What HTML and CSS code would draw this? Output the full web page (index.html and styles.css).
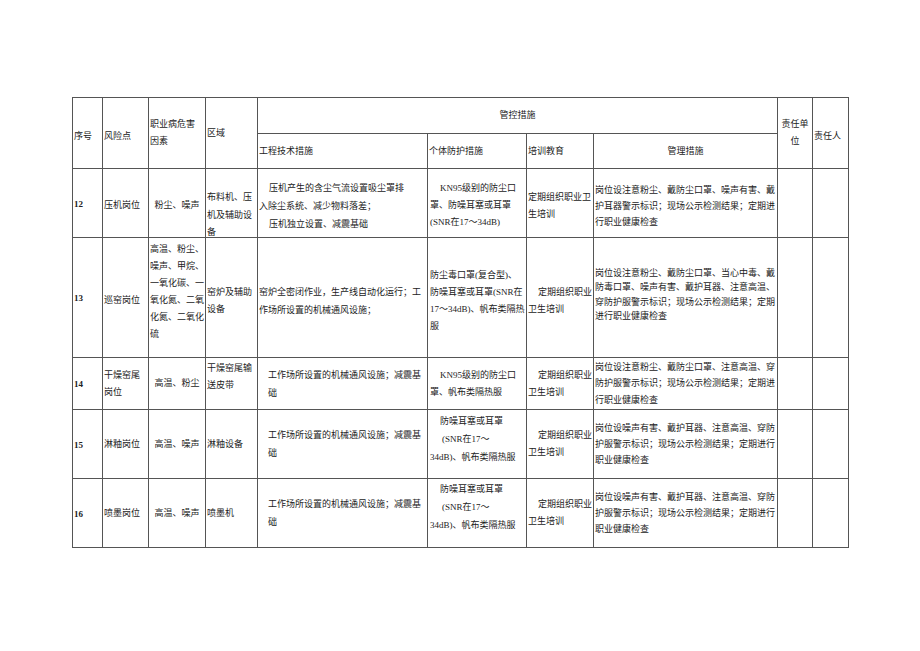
FILE: index.html
```html
<!DOCTYPE html>
<html lang="zh">
<head>
<meta charset="utf-8">
<title>职业病危害风险管控</title>
<link rel="stylesheet" href="styles.css">
</head>
<body>
<div class="page">
<table class="grid">
<colgroup>
<col class="w-no"><col class="w-risk"><col class="w-factor"><col class="w-area"><col class="w-eng"><col class="w-ppe"><col class="w-train"><col class="w-mgmt"><col class="w-unit"><col class="w-person">
</colgroup>
<tr class="h1">
<td rowspan="2" class="hdl">序号</td>
<td rowspan="2" class="hdl">风险点</td>
<td rowspan="2">职业病危害<br>因素</td>
<td rowspan="2">区域</td>
<td colspan="4" class="c">管控措施</td>
<td rowspan="2" class="c">责任单<br>位</td>
<td rowspan="2" class="hdl">责任人</td>
</tr>
<tr class="h2">
<td>工程技术措施</td>
<td>个体防护措施</td>
<td>培训教育</td>
<td class="c">管理措施</td>
</tr>

<tr class="r12">
<td class="no">12</td>
<td>压机岗位</td>
<td class="c">粉尘、噪声</td>
<td class="sunk"><div class="sink">布料机、压<br>机及辅助设<br>备</div></td>
<td class="eng"><div class="ind">压机产生的含尘气流设置吸尘罩排</div><div>入除尘系统、减少物料落差；</div><div class="ind">压机独立设置、减震基础</div></td>
<td class="ppe"><div class="ind">KN95级别的防尘口</div><div>罩、防噪耳塞或耳罩</div><div>(SNR在17～34dB)</div></td>
<td>定期组织职业卫<br>生培训</td>
<td class="mgmt">岗位设注意粉尘、戴防尘口罩、噪声有害、戴<br>护耳器警示标识；现场公示检测结果；定期进<br>行职业健康检查</td>
<td></td><td></td>
</tr>

<tr class="r13">
<td class="no">13</td>
<td>巡窑岗位</td>
<td class="top">高温、粉尘、<br>噪声、甲烷、<br>一氧化碳、一<br>氧化氮、二氧<br>化氮、二氧化<br>硫</td>
<td>窑炉及辅助<br>设备</td>
<td class="eng0">窑炉全密闭作业，生产线自动化运行；工<br>作场所设置的机械通风设施；</td>
<td class="ppe">防尘毒口罩(复合型)、<br>防噪耳塞或耳罩(SNR在<br>17～34dB)、帆布类隔热<br>服</td>
<td><div class="ind">定期组织职业</div><div>卫生培训</div></td>
<td class="mgmt tight">岗位设注意粉尘、戴防尘口罩、当心中毒、戴<br>防毒口罩、噪声有害、戴护耳器、注意高温、<br>穿防护服警示标识；现场公示检测结果；定期<br>进行职业健康检查</td>
<td></td><td></td>
</tr>

<tr class="r14">
<td class="no">14</td>
<td>干燥窑尾<br>岗位</td>
<td class="c">高温、粉尘</td>
<td class="top2">干燥窑尾输<br>送皮带</td>
<td class="eng">工作场所设置的机械通风设施；减震基<br>础</td>
<td class="ppe"><div class="ind">KN95级别的防尘口</div><div>罩、帆布类隔热服</div></td>
<td><div class="ind">定期组织职业</div><div>卫生培训</div></td>
<td class="mgmt loose">岗位设注意粉尘、戴防尘口罩、注意高温、穿<br>防护服警示标识；现场公示检测结果；定期进<br>行职业健康检查</td>
<td></td><td></td>
</tr>

<tr class="r15">
<td class="no">15</td>
<td>淋釉岗位</td>
<td class="c">高温、噪声</td>
<td>淋釉设备</td>
<td class="eng">工作场所设置的机械通风设施；减震基<br>础</td>
<td class="ppe raised"><div class="ind">防噪耳塞或耳罩</div><div class="ind2">(SNR在17～</div><div>34dB)、帆布类隔热服</div></td>
<td><div class="ind">定期组织职业</div><div>卫生培训</div></td>
<td class="mgmt">岗位设噪声有害、戴护耳器、注意高温、穿防<br>护服警示标识；现场公示检测结果；定期进行<br>职业健康检查</td>
<td></td><td></td>
</tr>

<tr class="r16">
<td class="no">16</td>
<td>喷墨岗位</td>
<td class="c">高温、噪声</td>
<td>喷墨机</td>
<td class="eng">工作场所设置的机械通风设施；减震基<br>础</td>
<td class="ppe raised2"><div class="ind">防噪耳塞或耳罩</div><div class="ind2">(SNR在17～</div><div>34dB)、帆布类隔热服</div></td>
<td><div class="ind">定期组织职业</div><div>卫生培训</div></td>
<td class="mgmt">岗位设噪声有害、戴护耳器、注意高温、穿防<br>护服警示标识；现场公示检测结果；定期进行<br>职业健康检查</td>
<td></td><td></td>
</tr>
</table>
</div>
</body>
</html>
```

FILE: styles.css
```css
html, body {
  margin: 0;
  background: #ffffff;
}

body {
  font-family: "Liberation Serif", "Noto Sans CJK SC", serif;
  font-size: 9px;
  color: #222222;
}

.page {
  padding: 97px 0 0 72px;
}

.grid {
  border-collapse: collapse;
  table-layout: fixed;
  width: 777px;
}

.w-no { width: 30px; }
.w-risk { width: 46px; }
.w-factor { width: 57px; }
.w-area { width: 52px; }
.w-eng { width: 170px; }
.w-ppe { width: 99px; }
.w-train { width: 67px; }
.w-mgmt { width: 184px; }
.w-unit { width: 35px; }
.w-person { width: 36px; }

.grid td {
  border: 1px solid #555555;
  padding: 0 1px;
  vertical-align: middle;
  line-height: 17px;
  white-space: nowrap;
  text-align: left;
}

.h1 { height: 36px; }
.h2 { height: 35px; }
.r12 { height: 69px; }
.r13 { height: 120px; }
.r14 { height: 52px; }
.r15 { height: 69px; }
.r16 { height: 69px; }

.grid td.hdl { padding-top: 7px; }

.grid td.c { text-align: center; }

.grid td.no {
  font-weight: bold;
  padding-top: 2px;
}

.r12 td { padding-top: 5px; }
.r13 td { padding-top: 6px; }

.grid td.sunk {
  vertical-align: top;
  padding-top: 20px;
}

.sink {
  line-height: 17.5px;
  margin-bottom: -8px;
}

.grid td.top {
  vertical-align: top;
  padding-top: 3px;
}

.grid td.top2 {
  vertical-align: top;
  padding-top: 2px;
}

.grid td.eng {
  line-height: 18px;
  padding-left: 1px;
}

.grid td.eng0 {
  line-height: 18px;
}

.r14 td.eng,
.r15 td.eng,
.r16 td.eng {
  padding-left: 10px;
}

.ind { text-indent: 10px; }
.ind2 { text-indent: 12px; }

.grid td.ppe {
  line-height: 17px;
  padding-left: 2px;
}

.r15 td.ppe,
.r16 td.ppe {
  line-height: 18px;
}

.grid td.raised { padding-bottom: 11px; }
.grid td.raised2 { padding-bottom: 13px; }

.grid td.mgmt {
  line-height: 16px;
  padding-left: 1px;
}

.grid td.mgmt.tight {
  line-height: 14.3px;
  padding-top: 0;
  padding-bottom: 6px;
}

.grid td.mgmt.loose {
  line-height: 16.5px;
}
```
